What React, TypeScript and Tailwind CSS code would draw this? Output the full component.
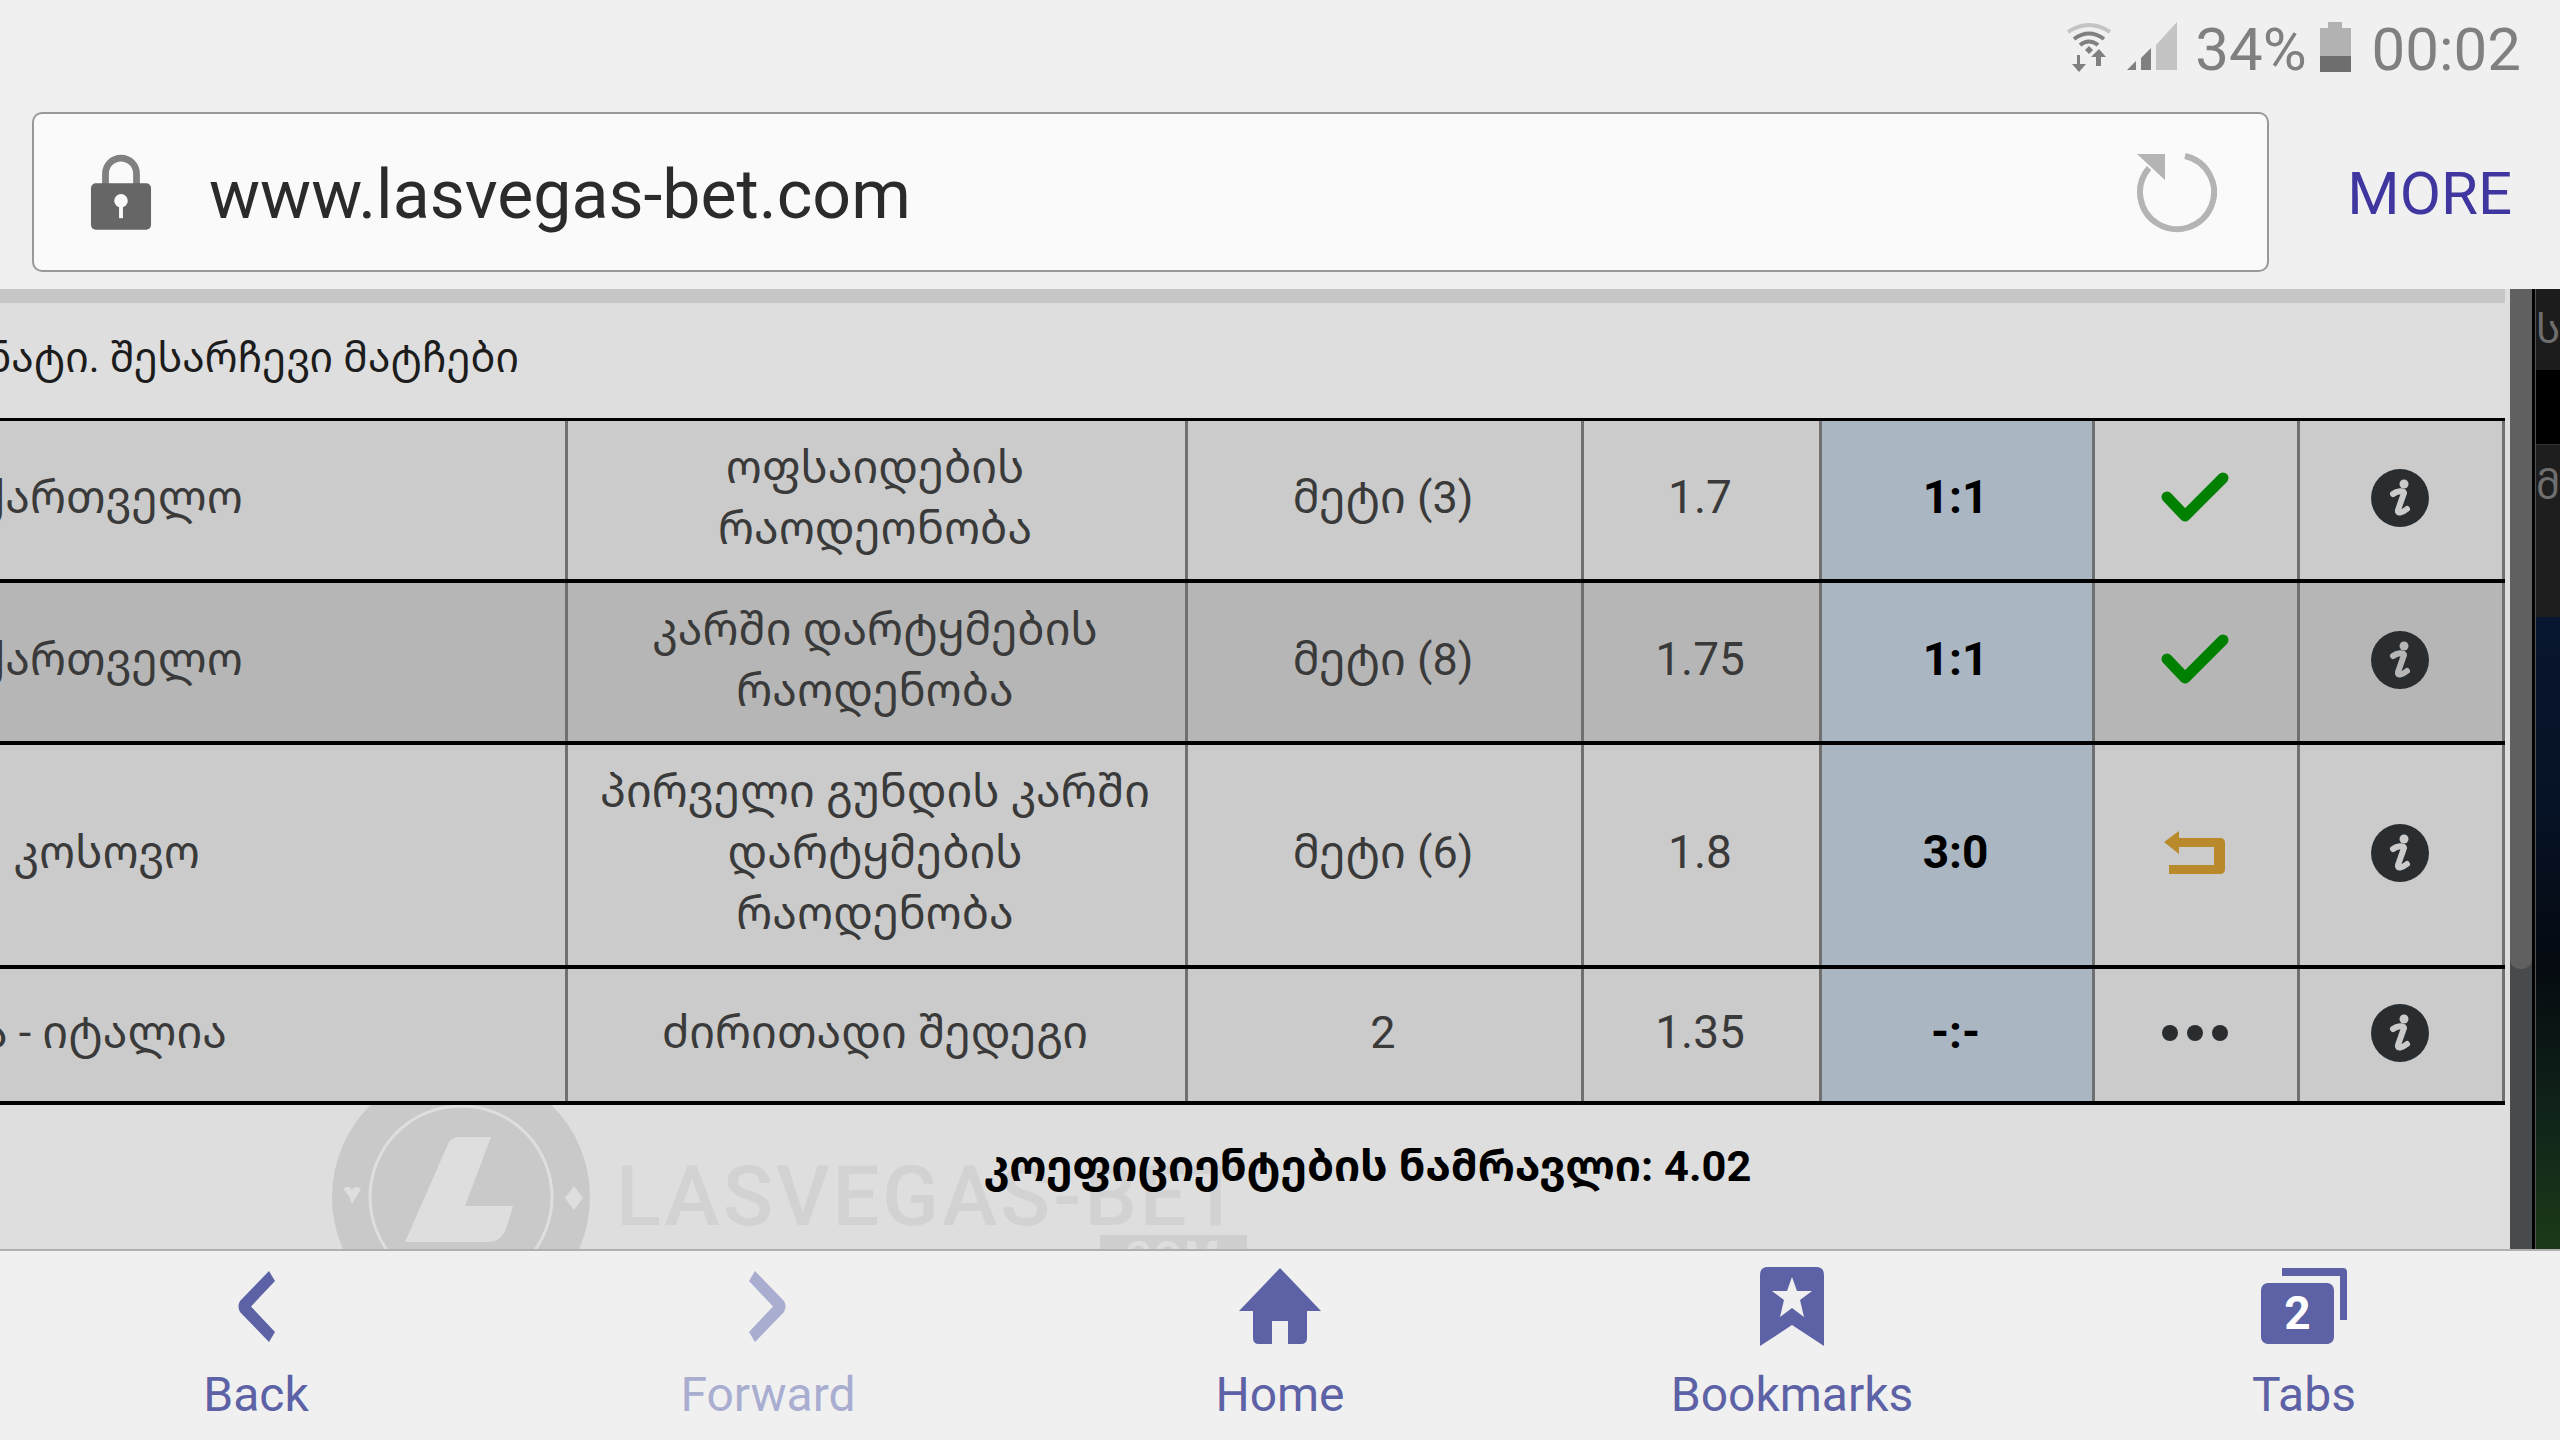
import React from "react";

const Geo = "font-['Roboto','Noto_Sans_Georgian','DejaVu_Sans',sans-serif]";

function Check() {
  return (
    <svg width="68" height="52" viewBox="0 0 68 52">
      <path d="M6 25 L24 44 L62 6" fill="none" stroke="#008000" strokeWidth="11" strokeLinecap="round" strokeLinejoin="round" />
    </svg>
  );
}
function Info({ bg }: { bg: string }) {
  return (
    <svg width="58" height="58" viewBox="0 0 58 58">
      <circle cx="29" cy="29" r="29" fill="#2a2d30" />
      <circle cx="33" cy="15" r="4.5" fill={bg} />
      <path d="M22 25 C26 22 33 21 33 24 L27 41 C26 45 31 44 36 40" fill="none" stroke={bg} strokeWidth="6" strokeLinecap="round" />
    </svg>
  );
}
function Ret() {
  return (
    <svg width="62" height="44" viewBox="0 0 62 44">
      <path d="M0 11 L15 0 L15 7 L56 7 Q61 7 61 12 L61 38 Q61 43 56 43 L5 43 L5 34 L50 34 L50 16 L15 16 L15 23 Z" fill="#b88a2c" />
    </svg>
  );
}
function Dots() {
  return (
    <svg width="66" height="18" viewBox="0 0 66 18">
      <circle cx="8" cy="9" r="8" fill="#2a2d30" />
      <circle cx="33" cy="9" r="8" fill="#2a2d30" />
      <circle cx="58" cy="9" r="8" fill="#2a2d30" />
    </svg>
  );
}

const cols = "grid grid-cols-[568px_620px_396px_238px_273px_205px_205px]";

function Row({ first, firstW, market, pick, odd, score, icon, alt, h }: { first: string; firstW: string; market: string[]; pick: string; odd: string; score: string; icon: React.ReactNode; alt?: boolean; h: string }) {
  const bg = alt ? "bg-[#b6b6b6]" : "bg-[#cbcbcb]";
  const cell = `${bg} border-r-[3px] border-[#707070] flex items-center justify-center pr-[3px]`;
  return (
    <div className={`${cols} ${h} border-b-[4px] border-black text-[45px] leading-[61px] text-[#3a3a3a] ${Geo}`}>
      <div className={`${bg} border-r-[3px] border-[#707070] flex items-center overflow-hidden pb-[6px]`}>
        <div className={`${firstW} shrink-0 flex justify-end whitespace-nowrap`}>{first}</div>
      </div>
      <div className={`${cell} flex-col text-center pb-[5px]`}>
        {market.map((m) => (
          <div key={m} className="whitespace-nowrap">{m}</div>
        ))}
      </div>
      <div className={`${cell} pb-[6px]`}>{pick}</div>
      <div className={`${cell} pb-[6px] text-[46px]`}>{odd}</div>
      <div className="bg-[#abb6c3] border-r-[3px] border-[#707070] flex items-center justify-center font-bold text-black font-['Roboto',sans-serif] text-[46px] pb-[6px] pr-[3px]">{score}</div>
      <div className={`${cell} pb-[4px]`}>{icon}</div>
      <div className={`${cell} pb-[4px]`}><Info bg={alt ? "#b6b6b6" : "#cbcbcb"} /></div>
    </div>
  );
}

function NavItem({ icon, label, color }: { icon: React.ReactNode; label: string; color: string }) {
  return (
    <div className="flex flex-col items-center">
      <div className="h-[78px] flex items-center justify-center">{icon}</div>
      <div className={`mt-[21px] text-[48px] leading-[58px] font-['Roboto',sans-serif] ${color}`}>{label}</div>
    </div>
  );
}

export default function App() {
  return (
    <div className="w-[2560px] h-[1440px] overflow-hidden flex flex-col bg-[#f0f0f0] font-['Roboto',sans-serif]">
      {/* status bar */}
      <div className="h-[112px] flex justify-end items-start pr-[39px] pt-[20px] text-[#808080]">
        <svg width="46" height="50" viewBox="0 0 46 50" className="mt-[2px]">
          <path d="M2 10 Q23 -4 44 10" fill="none" stroke="#c4c4c4" strokeWidth="4" />
          <path d="M8 17 Q23 6 38 17" fill="none" stroke="#808080" strokeWidth="4" />
          <path d="M14 23 Q23 16 32 23" fill="none" stroke="#808080" strokeWidth="4" />
          <path d="M19 28 L23 24 L27 28 L23 32 Z" fill="#808080" />
          <path d="M14 33 L14 42 L20 42 L13 50 L6 42 L11 42 L11 33 Z M33 27 L40 35 L35 35 L35 44 L30 44 L30 35 L25 35 Z" fill="#808080" />
        </svg>
        <svg width="50" height="50" viewBox="0 0 50 50" className="mt-[2px] ml-[15px]">
          <path d="M29 23 L50 0 L50 48 L29 48 Z" fill="#c4c4c4" />
          <path d="M14 36 L24 26 L24 48 L14 48 Z" fill="#808080" />
          <path d="M0 48 L9 39 L9 48 Z" fill="#808080" />
        </svg>
        <div className="text-[60px] leading-[60px] ml-[18px]">34%</div>
        <div className="w-[31px] h-[50px] flex flex-col items-center mt-[2px] ml-[13px]">
          <div className="w-[14px] h-[6px] bg-[#b2b2b2]" />
          <div className="w-[31px] h-[28px] bg-[#b2b2b2]" />
          <div className="w-[31px] h-[16px] bg-[#6e6e6e]" />
        </div>
        <div className="text-[60px] leading-[60px] ml-[21px]">00:02</div>
      </div>
      {/* url row */}
      <div className="h-[177px] flex items-start pl-[32px] pr-[48px]">
        <div className="w-[2237px] h-[160px] bg-[#fafafa] border-2 border-[#999999] rounded-[10px] flex items-center pl-[56px] pr-[50px]">
          <svg width="62" height="78" viewBox="0 0 64 78" className="shrink-0">
            <path d="M16 34 L16 20 A16 16 0 0 1 48 20 L48 34" fill="none" stroke="#808080" strokeWidth="7" />
            <rect x="1" y="30" width="62" height="48" rx="5" fill="#666666" />
            <circle cx="32" cy="48" r="7" fill="#fafafa" />
            <rect x="30" y="50" width="4" height="16" fill="#fafafa" />
          </svg>
          <div className="ml-[57px] text-[68px] text-[#2b2b2b] flex-1 leading-none pt-[6px]">www.lasvegas-bet.com</div>
          <svg width="84" height="86" viewBox="0 0 84 86" className="shrink-0 mt-[6px]">
            <path d="M52 4 A37 37 0 1 1 16 16" fill="none" stroke="#b4b4b4" strokeWidth="6" />
            <path d="M4 2 L32 2 L32 28 Z" fill="#b4b4b4" />
          </svg>
        </div>
        <div className="flex-1 h-[160px] flex items-center justify-end text-[60px] text-[#3f36a0] pt-[3px]">MORE</div>
      </div>
      {/* main */}
      <div className="h-[960px] flex bg-[#e0e0e0]">
        <div className="w-[2510px] relative overflow-hidden bg-[#dedede]">
          <div className="w-[2505px] h-[14px] bg-[#c6c6c6]" />
          {/* watermark */}
          <div className="absolute left-[330px] top-[777px] flex items-start">
            <svg width="262" height="262" viewBox="0 0 262 262">
              <circle cx="131" cy="131" r="129" fill="#c9c9c9" />
              <circle cx="131" cy="131" r="91" fill="none" stroke="#dedede" strokeWidth="3" />
              <path d="M118 78 Q121 71 130 71 L161 71 L135 140 L183 140 L177 160 Q172 176 158 176 L75 176 Z" fill="#dedede" />
              <path d="M19 130 L13 123 Q19 118 22 124 Q25 118 31 123 L22 138 Z" fill="#dedede" />
              <path d="M244 120 L253 132 L244 144 L235 132 Z" fill="#dedede" />
            </svg>
            <div className="ml-[24px] mt-[83px] text-[83px] leading-[96px] tracking-[3px] text-[#d2d2d2] font-medium whitespace-nowrap font-['Roboto',sans-serif]">
              <div>LASVEGAS-BET</div>
              <div className="flex justify-end -mr-[3px] -mt-[10px]">
                <div className="w-[147px] h-[60px] bg-[#cfcfcf] text-[#dedede] text-[40px] leading-[44px] font-bold tracking-[3px] text-center">COM</div>
              </div>
            </div>
          </div>
          <div className={`relative h-[115px] flex items-center overflow-hidden text-[41px] leading-[60px] text-[#1c1c1c] ${Geo}`}>
            <div className="w-[519px] shrink-0 flex justify-end whitespace-nowrap pb-[6px]">საბოლოო რჩეული ნატი. შესარჩევი მატჩები</div>
          </div>
          <div className="relative w-[2505px] border-t-[3px] border-black">
            <Row h="h-[162px]" first="საქართველო" firstW="w-[243px]" market={["ოფსაიდების", "რაოდეონობა"]} pick="მეტი (3)" odd="1.7" score="1:1" icon={<Check />} />
            <Row h="h-[162px]" alt first="საქართველო" firstW="w-[243px]" market={["კარში დარტყმების", "რაოდენობა"]} pick="მეტი (8)" odd="1.75" score="1:1" icon={<Check />} />
            <Row h="h-[224px]" first="კოსოვო" firstW="w-[200px]" market={["პირველი გუნდის კარში", "დარტყმების", "რაოდენობა"]} pick="მეტი (6)" odd="1.8" score="3:0" icon={<Ret />} />
            <Row h="h-[136px]" first="ხორვატია - იტალია" firstW="w-[227px]" market={["ძირითადი შედეგი"]} pick="2" odd="1.35" score="-:-" icon={<Dots />} />
          </div>
          <div className={`relative w-[2735px] text-center font-bold text-[43.4px] leading-[61px] text-black mt-[31px] ${Geo}`}>კოეფიციენტების ნამრავლი: 4.02</div>
        </div>
        <div className="w-[22px] bg-[#484b4e]">
          <div className="h-[680px] bg-[#606060] rounded-b-[10px]" />
        </div>
        <div className="w-[3px] bg-black" />
        <div className={`flex-1 flex flex-col overflow-hidden border-l border-[#555555] ${Geo} text-[40px] text-[#6e6e6e]`}>
          <div className="h-[81px] bg-[#1c1c1c] whitespace-nowrap flex items-center">ს</div>
          <div className="h-[75px] bg-black border-b border-[#333333]" />
          <div className="h-[172px] bg-[#1e1e1e] whitespace-nowrap flex items-center pb-[90px]">მ</div>
          <div className="flex-1 bg-[linear-gradient(to_bottom,#08162f_0%,#061226_30%,#050a10_55%,#11251a_80%,#1c3a18_100%)]" />
        </div>
      </div>
      {/* bottom nav */}
      <div className="flex-1 grid grid-cols-5 bg-[#f0f0f0] border-t-2 border-[#b0b0b0] pt-[16px]">
        <NavItem
          label="Back"
          color="text-[#5c62a5]"
          icon={
            <svg width="38" height="71" viewBox="0 0 38 71">
              <path d="M32 0 L38 10 L14 35.5 L38 61 L32 71 L3 41 Q0 35.5 3 30 Z" fill="#5c62a5" />
            </svg>
          }
        />
        <NavItem
          label="Forward"
          color="text-[#a9add0]"
          icon={
            <svg width="38" height="71" viewBox="0 0 38 71">
              <path d="M6 0 L0 10 L24 35.5 L0 61 L6 71 L35 41 Q38 35.5 35 30 Z" fill="#a9add0" />
            </svg>
          }
        />
        <NavItem
          label="Home"
          color="text-[#5c62a5]"
          icon={
            <svg width="82" height="76" viewBox="0 0 82 76">
              <path d="M41 0 L82 43 L68 43 L68 70 Q68 76 62 76 L49 76 L49 53 L33 53 L33 76 L20 76 Q14 76 14 70 L14 43 L0 43 Z" fill="#5c62a5" />
            </svg>
          }
        />
        <NavItem
          label="Bookmarks"
          color="text-[#5c62a5]"
          icon={
            <svg width="64" height="79" viewBox="0 0 64 79">
              <path d="M8 0 L56 0 Q64 0 64 8 L64 79 L32 58 L0 79 L0 8 Q0 0 8 0 Z" fill="#5c62a5" />
              <path d="M32 10 L37 24 L52 24 L40 33 L44 50 L32 41 L20 50 L24 33 L12 24 L27 24 Z" fill="#f0f0f0" />
            </svg>
          }
        />
        <NavItem
          label="Tabs"
          color="text-[#5c62a5]"
          icon={
            <div className="relative w-[86px] h-[76px]">
              <svg width="86" height="76" viewBox="0 0 86 76" className="absolute inset-0">
                <path d="M21 0 L82 0 Q86 0 86 4 L86 52 L79 52 L79 8 L21 8 Z" fill="#5c62a5" />
                <rect x="0" y="15" width="73" height="61" rx="7" fill="#5c62a5" />
              </svg>
              <span className="absolute left-0 w-[73px] top-[15px] h-[61px] flex items-center justify-center text-white font-bold text-[46px]">2</span>
            </div>
          }
        />
      </div>
    </div>
  );
}
